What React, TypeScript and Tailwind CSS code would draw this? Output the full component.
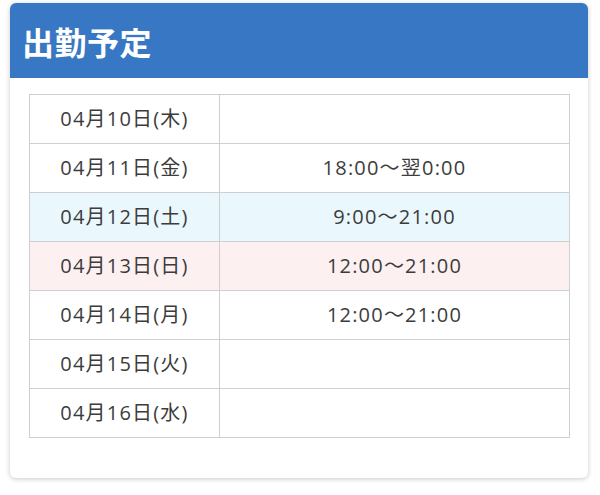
import React from "react";

const rows: { d: string; t: string; bg: string }[] = [
  { d: "04月10日(木)", t: "", bg: "bg-white" },
  { d: "04月11日(金)", t: "18:00〜翌0:00", bg: "bg-white" },
  { d: "04月12日(土)", t: "9:00〜21:00", bg: "bg-[#eaf8fd]" },
  { d: "04月13日(日)", t: "12:00〜21:00", bg: "bg-[#fcf0f1]" },
  { d: "04月14日(月)", t: "12:00〜21:00", bg: "bg-white" },
  { d: "04月15日(火)", t: "", bg: "bg-white" },
  { d: "04月16日(水)", t: "", bg: "bg-white" },
];

export default function App() {
  return (
    <div
      className="w-[600px] h-[495px] bg-white pt-[3px] pl-[10px]"
      style={{ fontFamily: '"Open Sans", "Noto Sans CJK JP", sans-serif' }}
    >
      <div className="w-[578px] h-[475px] rounded-[6px] bg-white shadow-[0_1px_5px_rgba(0,0,0,0.22)] overflow-hidden">
        <div className="h-[75px] bg-[#3877c4] flex items-center pl-[12px]">
          <h1
            className="text-white text-[32px] font-bold leading-none tracking-[0.5px] mt-[1px]"
            style={{ fontFamily: '"Noto Sans CJK JP", sans-serif' }}
          >
            出勤予定
          </h1>
        </div>
        <div className="pt-[16px] px-[19px]">
          <table className="w-[541px] border-collapse text-[#3c3c3c] text-[20px] tracking-[1.2px]">
            <tbody>
              {rows.map((r) => (
                <tr key={r.d} className={`${r.bg} h-[49px]`}>
                  <td className="w-[190px] border border-[#cfcfcf] text-center p-0 leading-none">{r.d}</td>
                  <td className="border border-[#cfcfcf] text-center p-0 leading-none">{r.t}</td>
                </tr>
              ))}
            </tbody>
          </table>
        </div>
      </div>
    </div>
  );
}
